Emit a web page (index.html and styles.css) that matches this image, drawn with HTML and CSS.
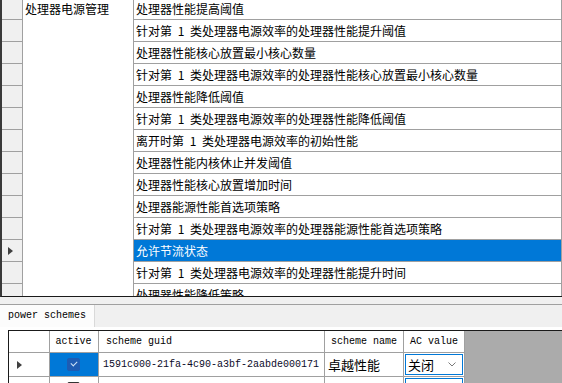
FILE: index.html
```html
<!DOCTYPE html>
<html lang="zh-CN">
<head>
    <meta charset="UTF-8">
    <title>power schemes</title>
    <link rel="stylesheet" href="styles.css">
</head>
<body>
    <div class="top-grid">
        <div class="top-rows">
            <div class="top-row">
                <div class="rh"></div>
                <div class="cat">处理器电源管理</div>
                <div class="setting">处理器性能提高阈值</div>
            </div>
            <div class="top-row">
                <div class="rh"></div>
                <div class="cat"></div>
                <div class="setting">针对第 1 类处理器电源效率的处理器性能提升阈值</div>
            </div>
            <div class="top-row">
                <div class="rh"></div>
                <div class="cat"></div>
                <div class="setting">处理器性能核心放置最小核心数量</div>
            </div>
            <div class="top-row">
                <div class="rh"></div>
                <div class="cat"></div>
                <div class="setting">针对第 1 类处理器电源效率的处理器性能核心放置最小核心数量</div>
            </div>
            <div class="top-row">
                <div class="rh"></div>
                <div class="cat"></div>
                <div class="setting">处理器性能降低阈值</div>
            </div>
            <div class="top-row">
                <div class="rh"></div>
                <div class="cat"></div>
                <div class="setting">针对第 1 类处理器电源效率的处理器性能降低阈值</div>
            </div>
            <div class="top-row">
                <div class="rh"></div>
                <div class="cat"></div>
                <div class="setting">离开时第 1 类处理器电源效率的初始性能</div>
            </div>
            <div class="top-row">
                <div class="rh"></div>
                <div class="cat"></div>
                <div class="setting">处理器性能内核休止并发阈值</div>
            </div>
            <div class="top-row">
                <div class="rh"></div>
                <div class="cat"></div>
                <div class="setting">处理器性能核心放置增加时间</div>
            </div>
            <div class="top-row">
                <div class="rh"></div>
                <div class="cat"></div>
                <div class="setting">处理器能源性能首选项策略</div>
            </div>
            <div class="top-row">
                <div class="rh"></div>
                <div class="cat"></div>
                <div class="setting">针对第 1 类处理器电源效率的处理器能源性能首选项策略</div>
            </div>
            <div class="top-row">
                <div class="rh"><span class="arrow"></span></div>
                <div class="cat"></div>
                <div class="setting selected">允许节流状态</div>
            </div>
            <div class="top-row">
                <div class="rh"></div>
                <div class="cat"></div>
                <div class="setting">针对第 1 类处理器电源效率的处理器性能提升时间</div>
            </div>
            <div class="top-row">
                <div class="rh"></div>
                <div class="cat"></div>
                <div class="setting">处理器性能降低策略</div>
            </div>
        </div>
    </div>

    <div class="splitter"></div>

    <div class="tabs">
        <div class="tab-strip">
            <div class="tab current">power schemes</div>
        </div>
        <div class="tab-page">
            <div class="grid">
                <div class="grid-row head">
                    <div class="c c-rh"></div>
                    <div class="c c-active center">active</div>
                    <div class="c c-guid">scheme guid</div>
                    <div class="c c-name center">scheme name</div>
                    <div class="c c-ac center">AC value</div>
                </div>
                <div class="grid-row">
                    <div class="c c-rh"><span class="arrow"></span></div>
                    <div class="c c-active current-cell"><span class="check on"></span></div>
                    <div class="c c-guid mono">1591c000-21fa-4c90-a3bf-2aabde000171</div>
                    <div class="c c-name cjk">卓越性能</div>
                    <div class="c c-ac">
                        <div class="combo">
                            <span>关闭</span>
                            <svg width="8" height="5" viewBox="0 0 8 5"><path d="M0.5 0.5 L4 4 L7.5 0.5" fill="none" stroke="#7a7a7a" stroke-width="1"/></svg>
                        </div>
                    </div>
                </div>
                <div class="grid-row">
                    <div class="c c-rh"></div>
                    <div class="c c-active"><span class="check"></span></div>
                    <div class="c c-guid mono"></div>
                    <div class="c c-name cjk"></div>
                    <div class="c c-ac">
                        <div class="combo"></div>
                    </div>
                </div>
            </div>
        </div>
    </div>
</body>
</html>
```

FILE: styles.css
```css
* {
    margin: 0;
    padding: 0;
    box-sizing: border-box;
}

html,
body {
    width: 562px;
    height: 383px;
    overflow: hidden;
    background: #f0f0f0;
    font-family: "Noto Sans CJK SC", "Liberation Sans", sans-serif;
}

/* 上半部分设置表格 */
.top-grid {
    height: 297px;
    background: #fff;
    border-left: 2px solid #3a3a3a;
    border-bottom: 1px solid #1a1a1a;
    overflow: hidden;
}

.top-rows {
    margin-top: -2px;
}

.top-row {
    display: flex;
    height: 22px;
}

.rh {
    width: 21px;
    background: #f0f0f0;
    border-right: 1px solid #a0a0a0;
    border-bottom: 1px solid #a0a0a0;
    display: flex;
    align-items: center;
    padding-left: 6px;
}

.cat {
    width: 111px;
    border-right: 1px solid #a0a0a0;
    font-size: 12px;
    line-height: 21px;
    padding-left: 2px;
    white-space: nowrap;
}

.setting {
    width: 428px;
    border-right: 1px solid #a0a0a0;
    border-bottom: 1px solid #a0a0a0;
    font-size: 12px;
    line-height: 21px;
    padding-left: 2px;
    white-space: nowrap;
    word-spacing: 3px;
    color: #000;
}

.setting.selected {
    background: #0078d7;
    color: #fff;
}

.arrow {
    width: 0;
    height: 0;
    border-top: 4.5px solid transparent;
    border-bottom: 4.5px solid transparent;
    border-left: 5px solid #404040;
}

.splitter {
    height: 7px;
    background: #f0f0f0;
}

/* 下半部分选项卡 */
.tabs {
    border-top: 1px solid #a0a0a0;
}

.tab-strip {
    height: 22px;
    display: flex;
    background: #f0f0f0;
}

.tab {
    width: 95px;
    background: #fcfcfc;
    border-right: 1px solid #d9d9d9;
    font-family: "Liberation Mono", monospace;
    font-size: 10px;
    line-height: 22px;
    padding-left: 8px;
    color: #000;
}

.tab-page {
    background: #fff;
    padding: 3px 0 0 8px;
    height: 60px;
}

.grid {
    background: #ababab;
    border-left: 1px solid #1a1a1a;
    border-top: 1px solid #1a1a1a;
    height: 100%;
}

.grid-row {
    display: flex;
    height: 24px;
}

.grid-row.head {
    height: 22px;
}

.c {
    background: #fff;
    border-right: 1px solid #a0a0a0;
    border-bottom: 1px solid #a0a0a0;
    display: flex;
    align-items: center;
    font-family: "Liberation Mono", monospace;
    font-size: 10px;
    white-space: nowrap;
    color: #000;
}

.c.center {
    justify-content: center;
}

.c-rh {
    width: 41px;
    padding-left: 8px;
}

.c-active {
    width: 49px;
    justify-content: center;
    padding-right: 1px;
}

.c-guid {
    width: 226px;
    padding-left: 4px;
}

.head .c-guid {
    padding-left: 7px;
}

.c-name {
    width: 79px;
}

.c-ac {
    width: 61px;
    padding: 1px;
    align-items: stretch;
}

.head .c-ac {
    align-items: center;
    padding: 0;
}

.cjk {
    font-family: "Noto Sans CJK SC", sans-serif;
    font-size: 13px;
    padding-left: 3px;
}

.mono {
    color: #0a0a28;
}

.current-cell {
    background: #0078d7;
}

.check {
    width: 13px;
    height: 13px;
    border: 1px solid #333;
    border-radius: 2px;
    background: #fff;
}

.check.on {
    background: #1e5cb3;
    border-color: #1e5cb3;
    position: relative;
}

.check.on::after {
    content: "";
    position: absolute;
    left: 3px;
    top: 2px;
    width: 5px;
    height: 3px;
    border-left: 1px solid #cfe2f7;
    border-bottom: 1px solid #cfe2f7;
    transform: rotate(-45deg);
}

.combo {
    flex: 1;
    border: 1px solid #0078d7;
    background: #fff;
    display: flex;
    align-items: center;
    justify-content: space-between;
    padding: 0 6px 0 2px;
    font-family: "Noto Sans CJK SC", sans-serif;
    font-size: 13px;
}
```
